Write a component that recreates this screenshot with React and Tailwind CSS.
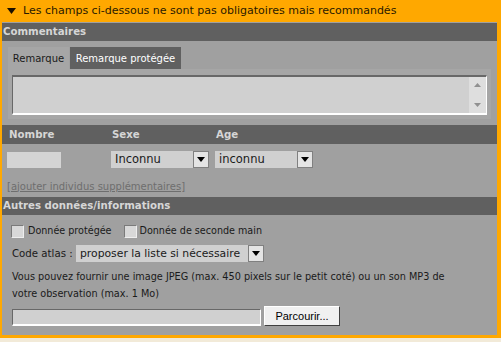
import React from 'react';

const font = { fontFamily: '"DejaVu Sans", Verdana, sans-serif' };

const Select = ({ value, width, size }) => (
  <div className={`flex items-center h-[17px] bg-[#d0d0d0] ${width}`}>
    <span className={`flex-1 pl-[4px] text-[#1a1a1a] leading-[17px] whitespace-nowrap ${size}`}>{value}</span>
    <span className="shrink-0 w-[16px] h-[17px] bg-[#e4e4e4] border border-[#808080] flex items-center justify-center">
      <svg width="8" height="5" viewBox="0 0 8 5"><path d="M0 0h8L4 5z" fill="#000" /></svg>
    </span>
  </div>
);

const Checkbox = () => (
  <span className="block shrink-0 w-[13px] h-[13px] bg-[#d8d8d8] border-t border-l border-t-[#7a7a7a] border-l-[#7a7a7a] border-b border-r border-b-[#eeeeee] border-r-[#eeeeee]" />
);

const SectionHeader = ({ children }) => (
  <div className="shrink-0 h-[18px] bg-[#606060] flex items-center pl-[1px] text-[10.2px] font-bold text-[#d6d6d6]">{children}</div>
);

export default function App() {
  return (
    <div className="w-[501px] h-[342px] bg-[#f2ead8]" style={font}>
      <div className="w-[501px] h-[338px] bg-[#ffa800] pl-[2px] pr-[4px] pb-[3px] flex flex-col">
        <div className="shrink-0 h-[22px] flex items-center pl-[5px] gap-[7px] text-[11px] text-[#2a1a00]">
          <svg width="9" height="6" viewBox="0 0 9 6"><path d="M0 0h9L4.5 6z" fill="#1a1000" /></svg>
          <span>Les champs ci-dessous ne sont pas obligatoires mais recommandés</span>
        </div>
        <div className="flex-1 min-h-0 overflow-hidden bg-[#a0a0a0] flex flex-col">
          <div className="mt-[1px]">
            <SectionHeader>Commentaires</SectionHeader>
          </div>
          <div className="shrink-0 px-[6px] pt-[6px]">
            <div className="flex h-[22px] text-[10px]">
              <div className="w-[61px] flex items-center justify-center bg-[#a6a6a6] text-[#1a1a1a]">Remarque</div>
              <div className="w-[111px] ml-[1px] flex items-center justify-center bg-[#606060] text-white">Remarque protégée</div>
            </div>
            <div className="bg-[#a6a6a6] px-[4px] pt-[6px] pb-[4px]">
              <div className="h-[40px] bg-[#d0d0d0] border-t-2 border-l border-t-[#686868] border-l-[#686868] border-b-2 border-r border-b-white border-r-white flex">
                <div className="flex-1" />
                <div className="w-[17px] bg-[#dedede] flex flex-col items-center justify-between py-[6px]">
                  <svg width="7" height="4" viewBox="0 0 7 4"><path d="M0 4h7L3.5 0z" fill="#909090" /></svg>
                  <svg width="7" height="4" viewBox="0 0 7 4"><path d="M0 0h7L3.5 4z" fill="#909090" /></svg>
                </div>
              </div>
            </div>
          </div>
          <div className="shrink-0 mt-[6px] h-[19px] bg-[#606060] flex items-center text-[10.2px] font-bold text-[#d6d6d6]">
            <span className="pl-[7px] w-[110px]">Nombre</span>
            <span className="w-[104px]">Sexe</span>
            <span>Age</span>
          </div>
          <div className="shrink-0 flex items-center mt-[7px] h-[17px]">
            <div className="ml-[5px] w-[54px] h-[16px] bg-[#d4d4d4]" />
            <div className="ml-[50px]"><Select value="Inconnu" width="w-[98px]" size="text-[11.5px]" /></div>
            <div className="ml-[6px]"><Select value="inconnu" width="w-[98px]" size="text-[11.5px]" /></div>
          </div>
          <div className="shrink-0 mt-[10px] h-[16px] flex items-center pl-[5px] text-[10px] text-[#6e6e6e] underline">[ajouter individus supplémentaires]</div>
          <div className="mt-[3px]">
            <SectionHeader>Autres données/informations</SectionHeader>
          </div>
          <div className="shrink-0 flex items-center mt-[9px] h-[15px] pl-[9px] text-[9.6px] text-[#1a1a1a]">
            <Checkbox />
            <span className="ml-[4px]">Donnée protégée</span>
            <span className="ml-[12px]"><Checkbox /></span>
            <span className="ml-[3px]">Donnée de seconde main</span>
          </div>
          <div className="shrink-0 flex items-center mt-[6px] pl-[10px] text-[10.2px] text-[#1a1a1a]">
            <span className="w-[64px] whitespace-nowrap">Code atlas :</span>
            <Select value="proposer la liste si nécessaire" width="w-[188px]" size="text-[10.8px]" />
          </div>
          <div className="shrink-0 mt-[6px] pl-[10px] w-[470px] text-[9.7px] leading-[17px] text-[#1a1a1a]">
            Vous pouvez fournir une image JPEG (max. 450 pixels sur le petit coté) ou un son MP3 de votre observation (max. 1 Mo)
          </div>
          <div className="shrink-0 flex items-end mt-[4px] pl-[10px]">
            <div className="w-[249px] h-[17px] bg-[#d0d0d0] border-t border-l border-t-[#686868] border-l-[#686868] border-b-2 border-r border-b-white border-r-white" />
            <button
              className="ml-[3px] w-[76px] h-[20px] bg-[#f0f0f0] border border-t-white border-l-white border-b-[#404040] border-r-[#404040] text-[11px] text-black"
              style={{ fontFamily: '"Liberation Sans", Arial, sans-serif' }}
            >
              Parcourir...
            </button>
          </div>
        </div>
      </div>
    </div>
  );
}
